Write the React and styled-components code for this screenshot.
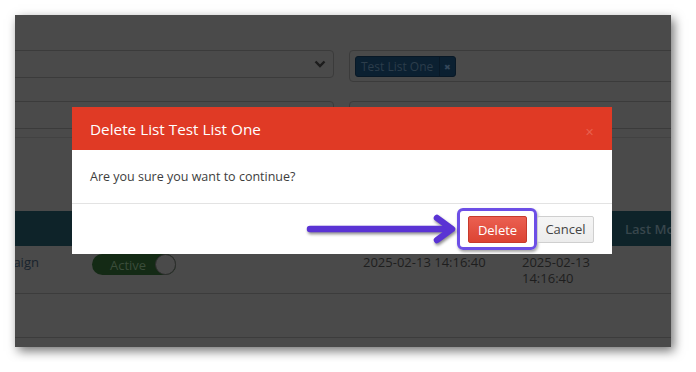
import styled, { createGlobalStyle } from 'styled-components';

const Global = createGlobalStyle`
  html, body {
    margin: 0;
    background: #ffffff;
    font-family: "Open Sans", "Liberation Sans", sans-serif;
  }
  #root {
    padding: 15px;
  }
`;

const Frame = styled.div`
  position: relative;
  width: 656px;
  height: 332px;
  overflow: hidden;
  background: #4a4a4a;
  box-shadow: 3px 4px 10px rgba(0, 0, 0, 0.55);
`;

const Page = styled.div`
  margin-left: -45px;
  width: 820px;
`;

const Form = styled.div`
  display: grid;
  grid-template-columns: 349px 349px;
  column-gap: 15px;
  row-gap: 19px;
  padding: 35px 15px 0;
  align-items: start;
`;

const Select = styled.div`
  height: 28px;
  box-sizing: border-box;
  border: 1px solid #3b3b3b;
  border-radius: 4px;
  display: flex;
  align-items: center;
  justify-content: flex-end;
  padding-right: 7px;
`;

const TagInput = styled.div`
  height: 32px;
  box-sizing: border-box;
  border: 1px solid #3b3b3b;
  border-radius: 4px;
  display: flex;
  align-items: center;
  padding-left: 5px;
  margin-right: -120px;
`;

const Tag = styled.div`
  display: flex;
  align-items: center;
  height: 21px;
  box-sizing: border-box;
  background: #0b2031;
  border: 1px solid #081826;
  border-radius: 3px;
  color: #2c3d4b;
  font-size: 12px;
`;

const TagLabel = styled.span`
  padding: 0 6px 0 5px;
  line-height: 19px;
`;

const TagRemove = styled.span`
  border-left: 1px solid #081826;
  padding: 0 4px;
  font-size: 8px;
  line-height: 19px;
  color: #34475a;
`;

const Input = styled.div`
  height: 28px;
  box-sizing: border-box;
  border: 1px solid #3b3b3b;
  border-radius: 4px;
`;

const Rule = styled.div`
  height: 1px;
  background: #424242;
  margin-top: 8px;
`;

const Field = styled.div`
  margin-right: ${(p) => (p.$wide ? '-120px' : '0')};
`;

const Table = styled.div`
  margin-top: 73px;
`;

const Row = styled.div`
  display: grid;
  grid-template-columns: 114px 271px 159px 103px 1fr;
  height: ${(p) => (p.$head ? '35px' : 'auto')};
  background: ${(p) => (p.$head ? '#0e2329' : 'transparent')};
  border-bottom: ${(p) => (p.$head ? 'none' : '1px solid #3c3c3c')};
  min-height: ${(p) => (p.$tall ? '43px' : '0')};
  align-items: ${(p) => (p.$head ? 'center' : 'start')};
`;

const HeadCell = styled.div`
  padding: 0 8px;
  font-size: 13px;
  font-weight: 600;
  color: #38464c;
  white-space: nowrap;
`;

const Cell = styled.div`
  padding: 8px 8px 7px;
  font-size: 13px;
  line-height: 16px;
  color: ${(p) => (p.$link ? '#18232d' : '#1e1e1e')};
`;

const Toggle = styled.div`
  display: flex;
  align-items: center;
  justify-content: space-between;
  width: 84px;
  height: 21px;
  box-sizing: border-box;
  border-radius: 11px;
  background: #142a15;
  padding-left: 18px;
  font-size: 13px;
  color: #3b4d3b;
`;

const Knob = styled.span`
  width: 19px;
  height: 19px;
  border-radius: 50%;
  background: #4a4a4a;
  border: 1px solid #2e2e2e;
`;

const Modal = styled.div`
  position: absolute;
  left: 57px;
  top: 92px;
  width: 540px;
  background: #ffffff;
  display: flex;
  flex-direction: column;
`;

const ModalHeader = styled.div`
  height: 43px;
  background: #e03a25;
  display: flex;
  align-items: center;
  justify-content: space-between;
  padding: 0 18px 0 18px;
  color: #ffffff;
  font-size: 15.3px;
`;

const Close = styled.span`
  color: #e8604e;
  font-size: 11px;
  margin-top: 5px;
`;

const ModalBody = styled.div`
  height: 54px;
  box-sizing: border-box;
  padding: 0 18px;
  display: flex;
  align-items: center;
  font-size: 12.5px;
  color: #3d3d3d;
  border-bottom: 1px solid #e3e3e3;
`;

const ModalFooter = styled.div`
  height: 50px;
  display: flex;
  align-items: center;
  justify-content: flex-end;
  padding-right: 18px;
`;

const Arrow = styled.svg`
  display: block;
  margin-right: 1px;
  filter: drop-shadow(1px 2px 1.5px rgba(0, 0, 0, 0.45));
`;

const Highlight = styled.div`
  border: 3px solid #6d4fe6;
  border-radius: 6px;
  padding: 5px 7px 4px 8px;
  box-shadow: 1px 2px 3px rgba(0, 0, 0, 0.35);
  display: flex;
`;

const Button = styled.button`
  height: 27px;
  box-sizing: border-box;
  padding: 0;
  width: ${(p) => (p.$danger ? '59px' : '57px')};
  font-family: inherit;
  font-size: 13px;
  border-radius: 2px;
  border: 1px solid ${(p) => (p.$danger ? '#c73a2c' : '#cfcfcf')};
  background: ${(p) =>
    p.$danger ? 'linear-gradient(#eb6051, #dc4433)' : 'linear-gradient(#f5f5f5, #ececec)'};
  color: ${(p) => (p.$danger ? '#ffffff' : '#444444')};
  cursor: pointer;
`;

function Chevron() {
  return (
    <svg width="12" height="8" viewBox="0 0 12 8">
      <path d="M1.5 1.5 L6 6 L10.5 1.5" fill="none" stroke="#1c1c1c" strokeWidth="2.4" />
    </svg>
  );
}

export default function App() {
  return (
    <>
      <Global />
      <Frame>
        <Page>
          <Form>
            <Select>
              <Chevron />
            </Select>
            <TagInput>
              <Tag>
                <TagLabel>Test List One</TagLabel>
                <TagRemove>✖</TagRemove>
              </Tag>
            </TagInput>
            <Field>
              <Input />
              <Rule />
            </Field>
            <Field $wide>
              <Input />
              <Rule />
            </Field>
          </Form>
          <Table>
            <Row $head>
              <HeadCell />
              <HeadCell />
              <HeadCell />
              <HeadCell />
              <HeadCell>Last Modified By</HeadCell>
            </Row>
            <Row>
              <Cell $link>Campaign</Cell>
              <Cell>
                <Toggle>
                  Active
                  <Knob />
                </Toggle>
              </Cell>
              <Cell>2025-02-13 14:16:40</Cell>
              <Cell>2025-02-13 14:16:40</Cell>
              <Cell />
            </Row>
            <Row $tall>
              <Cell />
            </Row>
          </Table>
        </Page>
        <Modal>
          <ModalHeader>
            Delete List Test List One
            <Close>✕</Close>
          </ModalHeader>
          <ModalBody>Are you sure you want to continue?</ModalBody>
          <ModalFooter>
            <Arrow width="153" height="30" viewBox="0 0 153 30">
              <line x1="7" y1="15" x2="146" y2="15" stroke="#5a33d4" strokeWidth="6.5" strokeLinecap="round" />
              <path
                d="M134 4 L149 15 L134 26"
                fill="none"
                stroke="#5a33d4"
                strokeWidth="6.5"
                strokeLinecap="round"
                strokeLinejoin="round"
              />
            </Arrow>
            <Highlight>
              <Button $danger>Delete</Button>
            </Highlight>
            <Button>Cancel</Button>
          </ModalFooter>
        </Modal>
      </Frame>
    </>
  );
}
